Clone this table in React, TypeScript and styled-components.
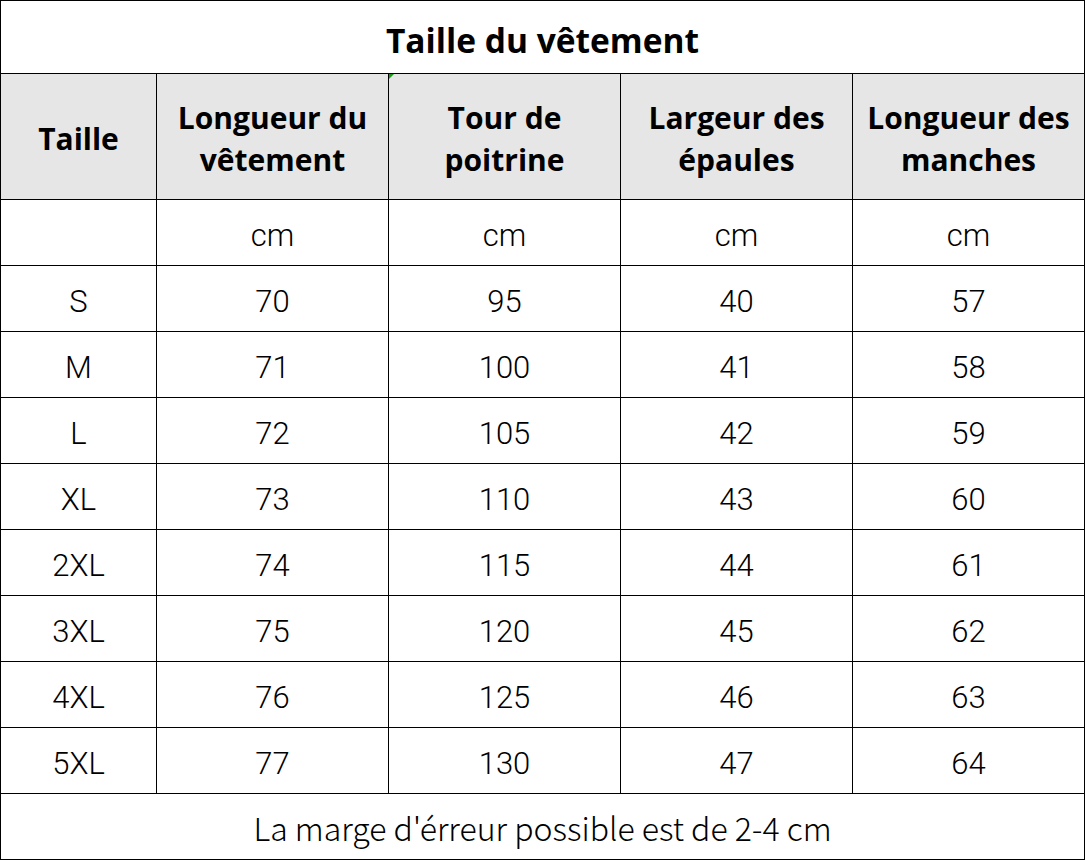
import React from "react";
import styled, { createGlobalStyle } from "styled-components";

const Global = createGlobalStyle`
  html, body { margin: 0; padding: 0; background: #fff; }
  #root { width: 1085px; }
`;

const Sheet = styled.div`
  display: grid;
  grid-template-columns: 155px repeat(4, 231px);
  grid-template-rows: 72px 125px repeat(10, 65px);
  gap: 1px;
  padding: 1px;
  background: #000;
  width: 1085px;
  height: 860px;
  box-sizing: border-box;
`;

const Cell = styled.div<{ $span?: number; $head?: boolean }>`
  position: relative;
  grid-column: ${(p) => (p.$span ? `span ${p.$span}` : "auto")};
  background: ${(p) => (p.$head ? "#e7e6e6" : "#fff")};
  display: flex;
  align-items: center;
  justify-content: center;
  text-align: center;
  color: #000;
  box-sizing: border-box;
`;

const Title = styled(Cell)`
  font-family: "Open Sans", "Noto Sans", sans-serif;
  font-weight: 700;
  font-size: 33.5px;
  padding-top: 5px;
`;

const Head = styled(Cell)`
  font-family: "Open Sans", "Noto Sans", sans-serif;
  font-weight: 700;
  font-size: 30px;
  line-height: 42px;
  padding-top: 4px;
`;

const Data = styled(Cell)`
  font-family: Roboto, "Liberation Sans", sans-serif;
  font-weight: 300;
  font-size: 31px;
  padding-top: 6px;
`;

const Note = styled(Cell)`
  font-family: "Noto Sans CJK SC", "Noto Sans", sans-serif;
  font-size: 32px;
  font-weight: 300;
  padding-top: 1px;
`;

const CommentMark = styled.span`
  position: absolute;
  top: 0;
  left: 0;
  width: 0;
  height: 0;
  border-top: 5px solid #1a9a1a;
  border-right: 5px solid transparent;
`;

const headers: React.ReactNode[] = [
  "Taille",
  <>Longueur du<br />vêtement</>,
  <>Tour de<br />poitrine</>,
  <>Largeur des<br />épaules</>,
  <>Longueur des<br />manches</>,
];

const rows: (string | number)[][] = [
  ["", "cm", "cm", "cm", "cm"],
  ["S", 70, 95, 40, 57],
  ["M", 71, 100, 41, 58],
  ["L", 72, 105, 42, 59],
  ["XL", 73, 110, 43, 60],
  ["2XL", 74, 115, 44, 61],
  ["3XL", 75, 120, 45, 62],
  ["4XL", 76, 125, 46, 63],
  ["5XL", 77, 130, 47, 64],
];

export default function App() {
  return (
    <>
      <Global />
      <Sheet>
        <Title $span={5}>Taille du vêtement</Title>
        {headers.map((h, i) => (
          <Head key={i} $head>
            {i === 2 && <CommentMark />}
            <span>{h}</span>
          </Head>
        ))}
        {rows.map((r, ri) =>
          r.map((v, ci) => <Data key={`${ri}-${ci}`}>{v}</Data>)
        )}
        <Note $span={5}>La marge d'érreur possible est de 2-4 cm</Note>
      </Sheet>
    </>
  );
}
